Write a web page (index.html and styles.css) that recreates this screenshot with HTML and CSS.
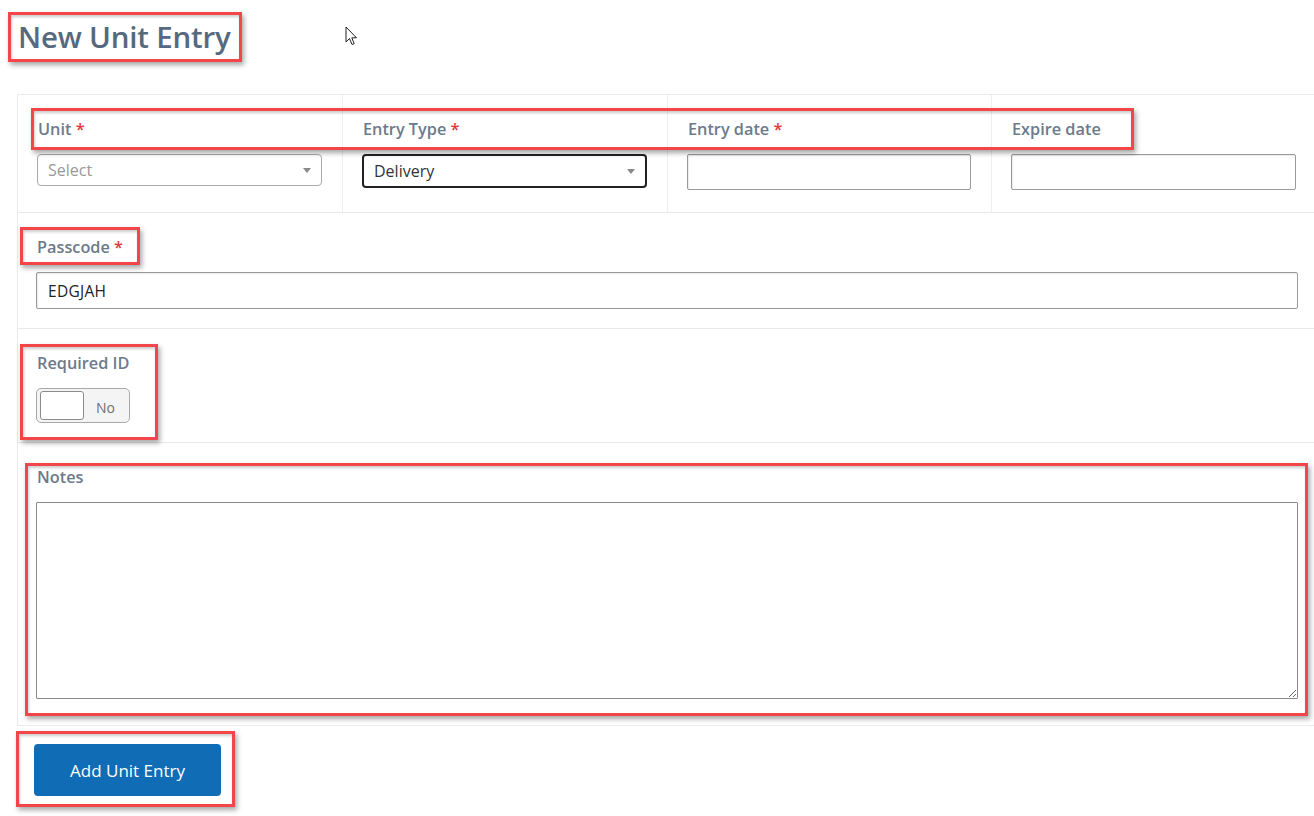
FILE: index.html
```html
<!DOCTYPE html>
<html>
<head>
	<title>New Unit Entry</title>
<link rel="stylesheet" href="styles.css">
</head>
<body>
<div class="page">
	<h1 class="title">New Unit Entry</h1>

	<form class="entry-form" autocomplete="off">
		<div class="row row-cols">
			<div class="cell">
				<label>Unit <span class="req">*</span></label>
				<div class="select">
					<span class="placeholder">Select</span>
					<span class="caret"></span>
				</div>
			</div>
			<div class="cell">
				<label>Entry Type <span class="req">*</span></label>
				<div class="select select-focus">
					<span>Delivery</span>
					<span class="caret"></span>
				</div>
			</div>
			<div class="cell">
				<label>Entry date <span class="req">*</span></label>
				<input type="text" class="field">
			</div>
			<div class="cell">
				<label>Expire date</label>
				<input type="text" class="field">
			</div>
		</div>

		<div class="row">
			<label>Passcode <span class="req">*</span></label>
			<input type="text" class="field field-wide" value="EDGJAH">
		</div>

		<div class="row">
			<label>Required ID</label>
			<div class="toggle">
				<span class="knob"></span>
				<span class="toggle-text">No</span>
			</div>
		</div>

		<div class="row row-notes">
			<label>Notes</label>
			<textarea class="notes"></textarea>
		</div>
	</form>

	<button type="button" class="btn-add">Add Unit Entry</button>

	<!-- annotation boxes -->
	<div class="mark mark-title"></div>
	<div class="mark mark-labels"></div>
	<div class="mark mark-passcode"></div>
	<div class="mark mark-required"></div>
	<div class="mark mark-notes"></div>
	<div class="mark mark-button"></div>

	<svg class="cursor" width="14" height="20" viewBox="0 0 14 20">
		<path d="M1 1 L1 16 L4.5 12.5 L7 18.5 L9.2 17.6 L6.8 11.8 L11.5 11.8 Z" fill="#fff" stroke="#222" stroke-width="1"/>
	</svg>
</div>
</body>
</html>
```

FILE: styles.css
```css
*{box-sizing: border-box;}

body{margin: 0;background: #fff;font-family: "Open Sans", "Noto Sans", sans-serif;overflow: hidden;}

.page{position: relative;width: 1314px;height: 816px;}

.title{margin: 0;padding: 16px 0 0 18px;height: 94px;font-size: 29.5px;font-weight: 600;color: #56697e;letter-spacing: -0.2px;}

.entry-form{margin: 0 -2px 0 17px;border-top: 1px solid #e8e9eb;border-left: 1px solid #e8e9eb;}

.row{padding: 23px 18px 19px 18px;border-bottom: 1px solid #e8e9eb;}
.row-cols{display: grid;grid-template-columns: 325px 325px 324px 1fr;padding: 0;}
.row-cols .cell{padding: 23px 20px 22px 19px;border-right: 1px solid #eeeeee;}
.row-cols .cell:last-child{border-right: none;}
.row-notes{padding-bottom: 26px;}

label{display: block;height: 22px;margin-bottom: 14px;padding-left: 1px;font-size: 16.3px;font-weight: 600;color: #6c7a8b;line-height: 22px;}
.req{color: #e2383c;}

.select{display: flex;align-items: center;justify-content: space-between;height: 32px;padding: 0 10px 0 10px;border: 1px solid #aaaaaa;border-radius: 4px;font-size: 16px;color: #333;}
.select .placeholder{color: #999;}
.select-focus{height: 34px;border: 2px solid #222;border-radius: 4px;padding-left: 10px;}
.caret{width: 0;height: 0;border-left: 4px solid transparent;border-right: 4px solid transparent;border-top: 5px solid #888;}

.field{display: block;width: 100%;height: 36px;padding: 0 11px;border: 1px solid #9a9a9a;border-radius: 2px;font-family: "Open Sans", sans-serif;font-size: 15.5px;color: #222;box-shadow: inset 1px 1px 1px rgba(0,0,0,0.08);}
.field-wide{height: 37px;letter-spacing: 0.3px;}

.toggle{display: flex;align-items: center;width: 94px;height: 35px;padding: 3px;border: 1px solid #a9a9a9;border-radius: 5px;background: #f4f4f4;}
.knob{width: 44px;height: 29px;background: #fff;border: 1px solid #8c8c8c;border-radius: 3px;}
.toggle-text{margin: 3px 0 0 12px;font-size: 14px;color: #6f6f6f;}

.notes{display: block;width: 100%;height: 197px;border: 1px solid #8a8a8a;border-radius: 1px;resize: vertical;font-family: "Open Sans", sans-serif;}

.btn-add{display: block;margin: 18px 0 0 34px;width: 187px;height: 52px;border: none;border-radius: 4px;background: #0f6cb5;color: #fff;font-family: "Open Sans", sans-serif;font-size: 17px;}

.mark{position: absolute;border: 3px solid #f2464a;box-shadow: 2px 3px 5px rgba(0,0,0,0.35), inset 1px 2px 3px rgba(0,0,0,0.2);pointer-events: none;}
.mark-title{left: 8px;top: 12px;width: 234px;height: 50px;}
.mark-labels{left: 31px;top: 108px;width: 1103px;height: 42px;}
.mark-passcode{left: 20px;top: 227px;width: 120px;height: 38px;}
.mark-required{left: 20px;top: 344px;width: 138px;height: 96px;}
.mark-notes{left: 25px;top: 463px;width: 1283px;height: 253px;}
.mark-button{left: 16px;top: 731px;width: 219px;height: 76px;}

.cursor{position: absolute;left: 345px;top: 26px;}
```
